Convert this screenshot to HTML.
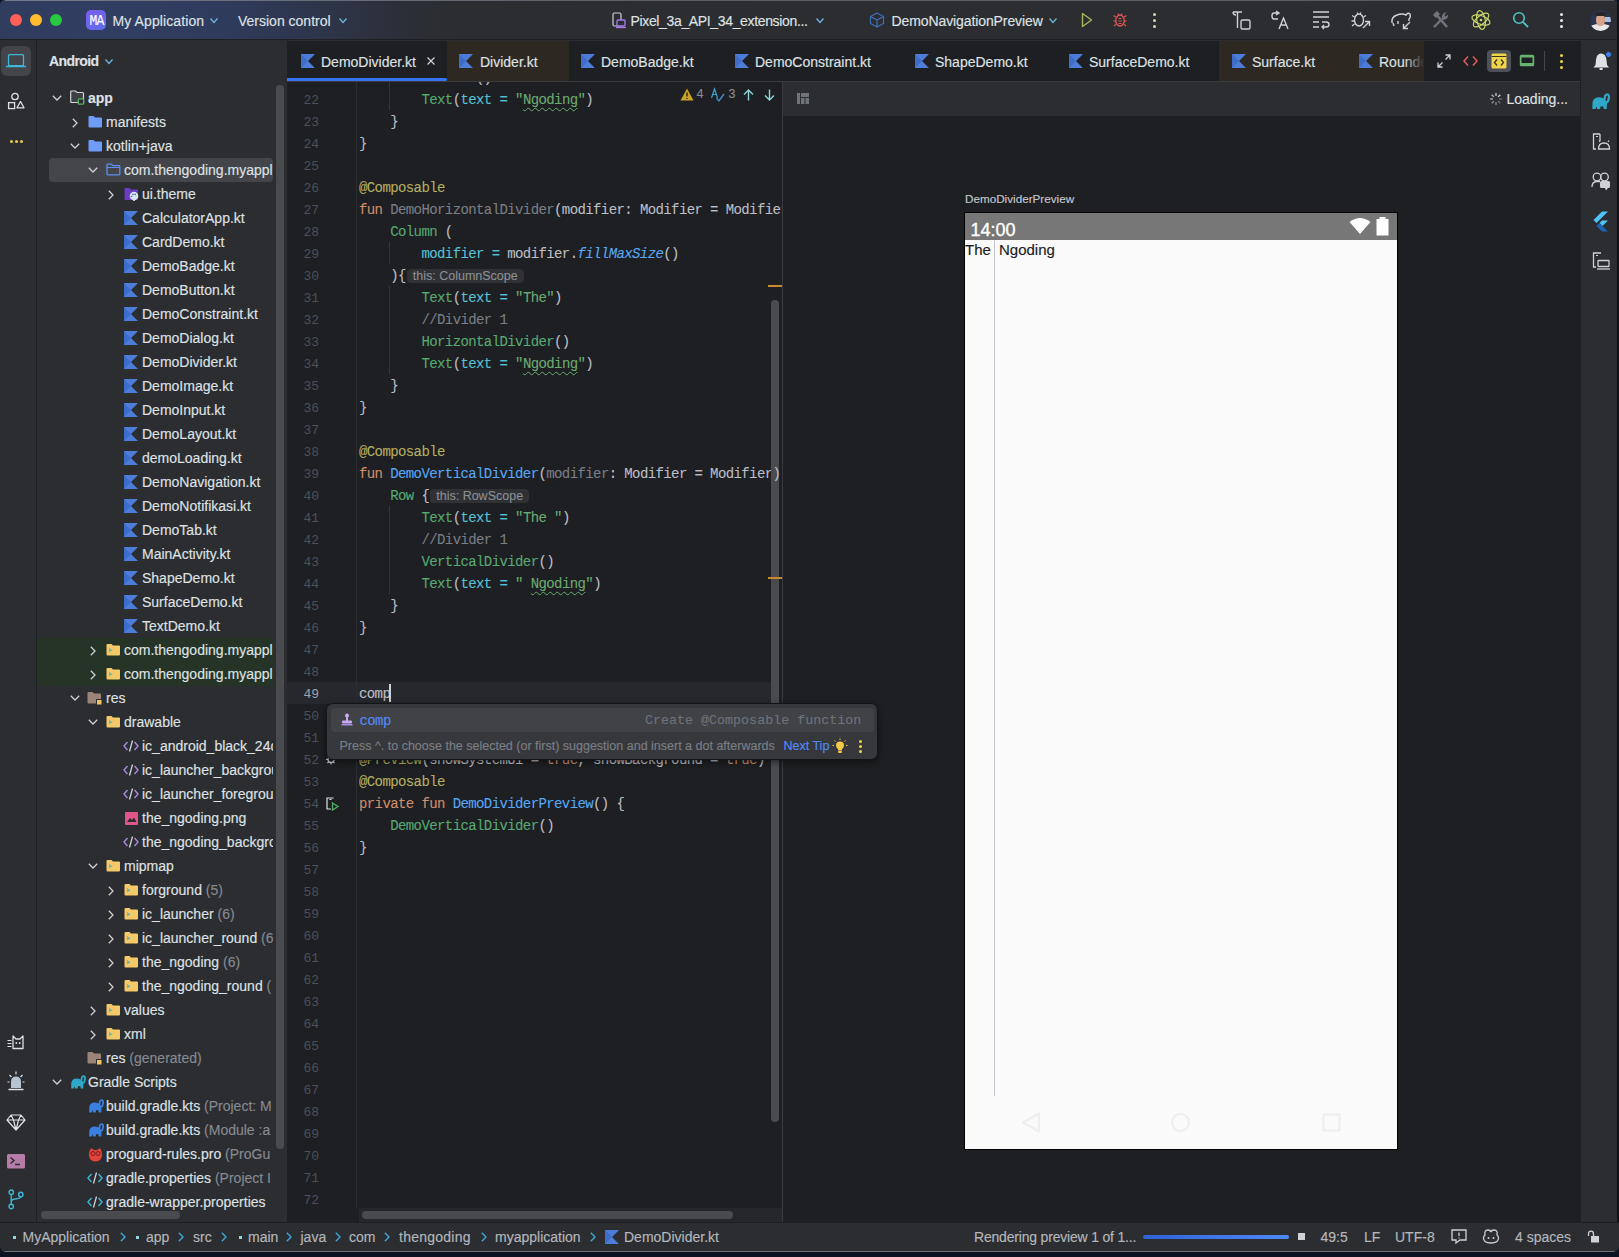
<!DOCTYPE html><html><head><meta charset="utf-8"><style>
*{box-sizing:border-box;margin:0;padding:0}
html,body{width:1619px;height:1257px;overflow:hidden;background:#0b1322}
body{font-family:"Liberation Sans",sans-serif;font-size:14px;color:#dfe1e5;position:relative}
.a{position:absolute}
svg{position:absolute;overflow:visible}
#win{position:absolute;left:0;top:0;width:1619px;height:1252px;background:#2b2d30;border-radius:5px 5px 6px 6px;overflow:hidden}
#title{position:absolute;left:0;top:0;width:1619px;height:40px;background:linear-gradient(90deg,#2f3c5e 0px,#303e62 120px,#2f3b5b 230px,#2d3446 340px,#2b2e35 410px,#2b2d30 470px,#2b2d30 100%);border-bottom:1px solid #1e1f22}
.t{position:absolute;white-space:pre;line-height:16px;height:16px;-webkit-text-stroke:0.15px currentColor}
#lstrip{left:0;top:41px;width:37px;height:1181px;background:#2b2d30;border-right:1px solid #1e1f22}
#proj{left:37px;top:41px;width:250px;height:1181px;background:#2b2d30;overflow:hidden}
#editor{left:287px;top:82px;width:495px;height:1140px;background:#1e1f22;overflow:hidden}
#tabs{left:287px;top:41px;width:1294px;height:41px;background:#1e1f22;border-bottom:1px solid #393b40;overflow:hidden}
#preview{left:782px;top:82px;width:799px;height:1140px;background:#1e1f22;border-left:1px solid #393b40}
#ptool{left:783px;top:82px;width:798px;height:34px;background:#2b2d30}
#rstrip{left:1580px;top:41px;width:39px;height:1181px;background:#2b2d30;border-left:1px solid #1e1f22}
#status{left:0;top:1222px;width:1619px;height:30px;background:#2b2d30;border-top:1px solid #1e1f22}
.row{position:absolute;height:16px;line-height:16px;white-space:pre;font-size:14px;color:#dfe1e5}
.ln{position:absolute;left:287px;width:32px;text-align:right;font-family:"Liberation Mono",monospace;font-size:13px;color:#4b5059;line-height:22px;height:22px}
.cl{position:absolute;left:359px;font-family:"Liberation Mono",monospace;font-size:14px;letter-spacing:-0.6px;color:#bcbec4;line-height:22px;height:22px;white-space:pre;-webkit-text-stroke:0.1px currentColor}
.kw{color:#cf8e6d}.an{color:#b3ae60}.fn{color:#56a8f5}.cp{color:#57aa73}.na{color:#56c1d6}.st{color:#6aab73}.cm{color:#7a7e85}.gr{color:#7a7e85}.it{font-style:italic;color:#56a8f5}
.hint{display:inline-block;background:#2f3135;color:#8c8f94;font-family:"Liberation Sans",sans-serif;font-size:12.5px;letter-spacing:0;line-height:14px;height:14px;padding:0 6px;border-radius:4px;vertical-align:0px;margin-left:1px}
.sq{text-decoration:underline wavy #6aab73;text-underline-offset:3px;text-decoration-thickness:1px}
.dim{color:#868a91}
</style></head><body><div id="win">
<div id="title">
<div class="a" style="left:10px;top:14px;width:12px;height:12px;border-radius:6px;background:#ff5f57"></div>
<div class="a" style="left:30px;top:14px;width:12px;height:12px;border-radius:6px;background:#febc2e"></div>
<div class="a" style="left:50px;top:14px;width:12px;height:12px;border-radius:6px;background:#28c840"></div>
<div class="a" style="left:86px;top:10px;width:20px;height:20px;border-radius:5px;background:linear-gradient(135deg,#7b5cf0,#5d6fe8)"></div>
<div class="t" style="left:87px;top:13.5px;width:19px;text-align:center;font-family:'Liberation Mono',monospace;font-size:13px;color:#fff;letter-spacing:-0.7px;transform:scaleY(1.12)">MA</div>
<div class="t" style="left:112.5px;top:13.0px;font-size:14px;color:#dfe1e5;font-weight:normal;letter-spacing:0.1px">My Application</div>
<svg style="left:210px;top:18px" width="8" height="5" viewBox="0 0 8 5"><path d="M0.5 0.5 L4.0 4.5 L7.5 0.5" fill="none" stroke="#6fb4dc" stroke-width="1.3"/></svg>
<div class="t" style="left:238px;top:13.0px;font-size:14px;color:#dfe1e5;font-weight:normal;">Version control</div>
<svg style="left:339px;top:18px" width="8" height="5" viewBox="0 0 8 5"><path d="M0.5 0.5 L4.0 4.5 L7.5 0.5" fill="none" stroke="#6fb4dc" stroke-width="1.3"/></svg>
<svg style="left:612px;top:12px" width="14" height="17" viewBox="0 0 14 17"><rect x="1" y="1" width="8" height="13" rx="1.5" fill="none" stroke="#cfd1d6" stroke-width="1.2"/><rect x="5" y="8" width="8" height="6" rx="1" fill="#2b2d30" stroke="#a77cf0" stroke-width="1.3"/><line x1="4" y1="15.5" x2="14" y2="15.5" stroke="#a77cf0" stroke-width="1.3"/></svg>
<div class="t" style="left:630.5px;top:13.0px;font-size:14px;color:#dfe1e5;font-weight:normal;letter-spacing:-0.35px">Pixel_3a_API_34_extension...</div>
<svg style="left:816px;top:18px" width="8" height="5" viewBox="0 0 8 5"><path d="M0.5 0.5 L4.0 4.5 L7.5 0.5" fill="none" stroke="#6fb4dc" stroke-width="1.3"/></svg>
<svg style="left:869px;top:12px" width="16" height="16" viewBox="0 0 16 16"><path d="M8 1 L14.5 4.5 L14.5 11.5 L8 15 L1.5 11.5 L1.5 4.5 Z M1.5 4.5 L8 8 L14.5 4.5 M8 8 L8 15" fill="none" stroke="#3f6fb8" stroke-width="1.2"/></svg>
<div class="t" style="left:891.5px;top:13.0px;font-size:14px;color:#dfe1e5;font-weight:normal;letter-spacing:-0.1px">DemoNavigationPreview</div>
<svg style="left:1049px;top:18px" width="8" height="5" viewBox="0 0 8 5"><path d="M0.5 0.5 L4.0 4.5 L7.5 0.5" fill="none" stroke="#6fb4dc" stroke-width="1.3"/></svg>
<svg style="left:1081px;top:12px" width="12" height="16" viewBox="0 0 12 16"><path d="M1.5 1.5 L10.5 8 L1.5 14.5 Z" fill="none" stroke="#a9b75c" stroke-width="1.4" stroke-linejoin="round"/></svg>
<svg style="left:1113px;top:12px" width="14" height="16" viewBox="0 0 14 16"><ellipse cx="7" cy="8.5" rx="4.2" ry="5.5" fill="none" stroke="#e05555" stroke-width="1.4"/><path d="M3 5 L0.5 3.5 M11 5 L13.5 3.5 M2.8 9 L0.3 9 M11.2 9 L13.7 9 M3 12.5 L0.8 14 M11 12.5 L13.2 14 M5 1.5 L6 3 M9 1.5 L8 3" stroke="#e05555" stroke-width="1.2"/><path d="M5.5 6.5 h3 M5.5 9 h3 M5.5 11.5 h3" stroke="#e05555" stroke-width="1"/></svg>
<div class="a" style="left:1152.5px;top:13px;width:3px;height:3px;border-radius:2px;background:#ded6a8"></div>
<div class="a" style="left:1152.5px;top:19px;width:3px;height:3px;border-radius:2px;background:#ded6a8"></div>
<div class="a" style="left:1152.5px;top:25px;width:3px;height:3px;border-radius:2px;background:#ded6a8"></div>
<svg style="left:1231px;top:10px" width="21" height="20" viewBox="0 0 21 20"><path d="M2 2 h9 M6.5 2 v16 M2 2 q0 3 3 3" fill="none" stroke="#cfd1d6" stroke-width="1.4"/><rect x="10" y="10" width="9" height="9" rx="1.5" fill="none" stroke="#cfd1d6" stroke-width="1.4"/></svg>
<svg style="left:1271px;top:10px" width="20" height="20" viewBox="0 0 20 20"><path d="M8 3 L3 3 Q1 3 1 6 Q1 9 3 9 L7 9 M5 1 L8 3 L5 5" fill="none" stroke="#cfd1d6" stroke-width="1.4"/><path d="M8 19 L12.5 8 L17 19 M9.5 15 h6" fill="none" stroke="#cfd1d6" stroke-width="1.4"/></svg>
<svg style="left:1311px;top:10px" width="20" height="20" viewBox="0 0 20 20"><path d="M2 2 h16 M2 7 h16 M2 12 h6 M2 17 h6" stroke="#cfd1d6" stroke-width="1.4"/><path d="M11 12 h4 q3 0 3 2.5 q0 2.5 -3 2.5 h-3 M13 15 L11 17 L13 19" fill="none" stroke="#cfd1d6" stroke-width="1.4"/></svg>
<svg style="left:1351px;top:10px" width="20" height="20" viewBox="0 0 20 20"><ellipse cx="8" cy="10" rx="4.5" ry="6" fill="none" stroke="#cfd1d6" stroke-width="1.4"/><path d="M3.5 7 L1 5.5 M3.5 11 L0.5 11 M3.5 14 L1 16 M12.5 7 L15 5.5 M6 2.5 L7 4 M10 2.5 L9 4" stroke="#cfd1d6" stroke-width="1.3"/><path d="M12 18 L18.5 11.5 M14 11.5 h4.5 v4.5" fill="none" stroke="#cfd1d6" stroke-width="1.4"/></svg>
<svg style="left:1390px;top:10px" width="22" height="20" viewBox="0 0 22 20"><path d="M2 13 Q1 7 7 5 Q12 3 16 5 Q18 2 20 4 Q21 7 19 9 L19 11 M3 13 L4 16 M8 11 L8 14" fill="none" stroke="#cfd1d6" stroke-width="1.4"/><path d="M20 12 L13.5 18.5 M13.5 14 v4.5 h4.5" fill="none" stroke="#cfd1d6" stroke-width="1.4"/></svg>
<svg style="left:1432px;top:10px" width="18" height="20" viewBox="0 0 18 20"><path d="M3 3 L15 17" stroke="#6f737a" stroke-width="2.6"/><path d="M1 5 L5 1 L8 4 L4 8 Z" fill="#6f737a"/><path d="M2 17 L10 9" stroke="#6f737a" stroke-width="2.4"/><path d="M10 9 Q9 4 13 2.5 L14.5 2.3 L12.5 5 L13.5 6.5 L16 4.8 Q16.5 9 11.5 10 Z" fill="#6f737a"/></svg>
<svg style="left:1470px;top:9px" width="22" height="22" viewBox="0 0 22 22"><ellipse cx="11" cy="11" rx="9.5" ry="4.2" transform="rotate(20 11 11)" fill="none" stroke="#c9d66e" stroke-width="1.2"/><ellipse cx="11" cy="11" rx="9.5" ry="4.2" transform="rotate(80 11 11)" fill="none" stroke="#c9d66e" stroke-width="1.2"/><ellipse cx="11" cy="11" rx="9.5" ry="4.2" transform="rotate(-40 11 11)" fill="none" stroke="#c9d66e" stroke-width="1.2"/><circle cx="11" cy="11" r="1.3" fill="#c9d66e"/></svg>
<svg style="left:1512px;top:11px" width="18" height="18" viewBox="0 0 18 18"><circle cx="7" cy="7" r="5.3" fill="none" stroke="#4fc3c0" stroke-width="1.6"/><path d="M11 11 L16 16" stroke="#4fc3c0" stroke-width="1.8"/></svg>
<div class="a" style="left:1559.5px;top:13px;width:3px;height:3px;border-radius:2px;background:#e8e8e8"></div>
<div class="a" style="left:1559.5px;top:19px;width:3px;height:3px;border-radius:2px;background:#e8e8e8"></div>
<div class="a" style="left:1559.5px;top:25px;width:3px;height:3px;border-radius:2px;background:#e8e8e8"></div>
<div class="a" style="left:1590px;top:10px;width:21px;height:21px;border-radius:11px;overflow:hidden;background:#2a3550"><div class="a" style="left:-2px;top:14px;width:25px;height:10px;border-radius:50%;background:#e8e8ea"></div><div class="a" style="left:6px;top:4px;width:9px;height:12px;border-radius:45%;background:#d9a48c"></div><div class="a" style="left:5px;top:2px;width:11px;height:4px;border-radius:40%;background:#2b2624"></div><div class="a" style="left:15px;top:7px;width:6px;height:5px;background:#a9c0e0"></div></div>
</div>
<div class="a" id="lstrip"></div>
<div class="a" style="left:1px;top:46px;width:30px;height:30px;border-radius:6px;background:#43454a"></div>
<svg style="left:6px;top:54px" width="20" height="14" viewBox="0 0 20 14"><rect x="2.5" y="0.7" width="15" height="11" rx="1" fill="none" stroke="#3fb6d8" stroke-width="1.3"/><path d="M0 12.5 h20" stroke="#3fb6d8" stroke-width="1.5"/></svg>
<svg style="left:7px;top:92px" width="18" height="18" viewBox="0 0 18 18"><circle cx="8" cy="4.5" r="3.2" fill="none" stroke="#dfe1e5" stroke-width="1.3"/><rect x="1.6" y="10.6" width="6" height="6" fill="none" stroke="#dfe1e5" stroke-width="1.3"/><path d="M13.5 9.5 L17 15.8 L10 15.8 Z" fill="none" stroke="#dfe1e5" stroke-width="1.3" stroke-linejoin="round"/></svg>
<div class="a" style="left:9.5px;top:139.5px;width:3.4px;height:3.4px;border-radius:2px;background:#e6c84a"></div>
<div class="a" style="left:14.5px;top:139.5px;width:3.4px;height:3.4px;border-radius:2px;background:#e6c84a"></div>
<div class="a" style="left:19.5px;top:139.5px;width:3.4px;height:3.4px;border-radius:2px;background:#e6c84a"></div>
<svg style="left:7px;top:1035px" width="18" height="15" viewBox="0 0 18 15"><path d="M6 13.5 L6 5 L6 1 L9 4 L13 4 L16 1 L16 13.5 Z" fill="none" stroke="#dfe1e5" stroke-width="1.3" stroke-linejoin="round"/><path d="M0.5 5.5 h4 M0.5 8.5 h4 M0.5 11.5 h4" stroke="#dfe1e5" stroke-width="1.2"/><circle cx="9.3" cy="8" r="0.9" fill="#dfe1e5"/><circle cx="12.7" cy="8" r="0.9" fill="#dfe1e5"/></svg>
<svg style="left:7px;top:1071px" width="18" height="20" viewBox="0 0 18 20"><path d="M4 17 L4 11 Q4 5.5 9 5.5 Q14 5.5 14 11 L14 17 Z" fill="#b7c4d3"/><path d="M1.5 18.5 h15" stroke="#dfe1e5" stroke-width="1.5"/><path d="M9 0.5 v3 M2.5 4 l2 2 M15.5 4 l-2 2 M0.5 11 h2 M15.5 11 h2" stroke="#dfe1e5" stroke-width="1.2"/></svg>
<svg style="left:6px;top:1114px" width="20" height="17" viewBox="0 0 20 17"><path d="M5 1 h10 L19 6 L10 16 L1 6 Z M1 6 h18 M5 1 L7.5 6 L10 16 L12.5 6 L15 1" fill="none" stroke="#dfe1e5" stroke-width="1.2" stroke-linejoin="round"/></svg>
<svg style="left:7px;top:1154px" width="18" height="15" viewBox="0 0 18 15"><rect x="0" y="0" width="18" height="14.5" rx="1.5" fill="#b57ca9"/><path d="M3.5 3.5 L7 6.5 L3.5 9.5" fill="none" stroke="#2b2d30" stroke-width="1.5"/><path d="M8 10.5 h5" stroke="#2b2d30" stroke-width="1.4"/></svg>
<svg style="left:8px;top:1189px" width="16" height="21" viewBox="0 0 16 21"><circle cx="3.2" cy="3.2" r="2.2" fill="none" stroke="#3fb6d8" stroke-width="1.4"/><circle cx="3.2" cy="17.5" r="2.2" fill="none" stroke="#3fb6d8" stroke-width="1.4"/><circle cx="12.8" cy="5.5" r="2.2" fill="none" stroke="#3fb6d8" stroke-width="1.4"/><path d="M3.2 5.4 L3.2 15.3 M3.2 13 Q3.2 10.5 7 10 Q12.8 9.5 12.8 7.7" fill="none" stroke="#3fb6d8" stroke-width="1.4"/></svg>
<div class="a" id="proj"></div>
<div class="t" style="left:49px;top:53px;font-weight:bold;color:#dfe1e5;letter-spacing:-0.6px">Android</div>
<svg style="left:105px;top:59px" width="8" height="5" viewBox="0 0 8 5"><path d="M0.5 0.5 L4.0 4.5 L7.5 0.5" fill="none" stroke="#6fb4dc" stroke-width="1.3"/></svg>
<div class="a" style="left:49px;top:158px;width:224px;height:24px;border-radius:4px;background:#43454a"></div>
<div class="a" style="left:37px;top:638px;width:236px;height:48px;background:#253427"></div>
<div class="a" style="left:37px;top:80px;width:236px;height:1142px;overflow:hidden">
<svg style="left:15px;top:15px" width="10" height="6" viewBox="0 0 10 6"><path d="M0.8 0.8 L5 5 L9.2 0.8" fill="none" stroke="#cfd1d6" stroke-width="1.3"/></svg>
<svg style="left:33px;top:10px" width="17" height="15" viewBox="0 0 17 15"><path d="M0.7 2 Q0.7 1 1.7 1 H5.5 L7 2.5 H12.5 Q13.5 2.5 13.5 3.5 V12.5 H1.7 Q0.7 12.5 0.7 11.5 Z" fill="#3c3f44" stroke="#cfd1d6" stroke-width="1.2"/><rect x="8.3" y="8.8" width="5.4" height="5.4" rx="1" fill="#2b2d30" stroke="#57b366" stroke-width="1.3"/></svg>
<div class="t" style="left:51px;top:10px;font-weight:bold">app</div>
<svg style="left:35px;top:37.5px" width="6" height="10" viewBox="0 0 6 10"><path d="M0.8 0.8 L5 5 L0.8 9.2" fill="none" stroke="#cfd1d6" stroke-width="1.3"/></svg>
<svg style="left:51px;top:35px" width="15" height="14" viewBox="0 0 15 14"><path d="M0.5 2 Q0.5 1 1.5 1 H5.5 L7 2.5 H13 Q14 2.5 14 3.5 V11.5 Q14 12.5 13 12.5 H1.5 Q0.5 12.5 0.5 11.5 Z" fill="#6e9cf6"/></svg>
<div class="t" style="left:69px;top:34px;font-weight:normal">manifests</div>
<svg style="left:33px;top:63px" width="10" height="6" viewBox="0 0 10 6"><path d="M0.8 0.8 L5 5 L9.2 0.8" fill="none" stroke="#cfd1d6" stroke-width="1.3"/></svg>
<svg style="left:51px;top:59px" width="15" height="14" viewBox="0 0 15 14"><path d="M0.5 2 Q0.5 1 1.5 1 H5.5 L7 2.5 H13 Q14 2.5 14 3.5 V11.5 Q14 12.5 13 12.5 H1.5 Q0.5 12.5 0.5 11.5 Z" fill="#6e9cf6"/></svg>
<div class="t" style="left:69px;top:58px;font-weight:normal">kotlin+java</div>
<svg style="left:51px;top:87px" width="10" height="6" viewBox="0 0 10 6"><path d="M0.8 0.8 L5 5 L9.2 0.8" fill="none" stroke="#cfd1d6" stroke-width="1.3"/></svg>
<svg style="left:69px;top:83px" width="15" height="13" viewBox="0 0 15 13"><path d="M1 2 Q1 1.2 1.8 1.2 H5.5 L7 2.7 H13 Q13.8 2.7 13.8 3.5 V11 Q13.8 11.8 13 11.8 H1.8 Q1 11.8 1 11 Z" fill="none" stroke="#5b8ff0" stroke-width="1.3"/><path d="M1 4.5 H13.8" stroke="#5b8ff0" stroke-width="1.2"/></svg>
<div class="t" style="left:87px;top:82px;font-weight:normal">com.thengoding.myappl</div>
<svg style="left:71px;top:109.5px" width="6" height="10" viewBox="0 0 6 10"><path d="M0.8 0.8 L5 5 L0.8 9.2" fill="none" stroke="#cfd1d6" stroke-width="1.3"/></svg>
<svg style="left:87px;top:107px" width="15" height="14" viewBox="0 0 15 14"><path d="M0.5 2 Q0.5 1 1.5 1 H5.5 L7 2.5 H13 Q14 2.5 14 3.5 V12 Q14 13 13 13 H1.5 Q0.5 13 0.5 12 Z" fill="#6a3dc2"/><circle cx="10" cy="9" r="4.3" fill="#dde6f7"/><circle cx="9" cy="7.4" r="0.8" fill="#3c6bd8"/><circle cx="11.2" cy="7.4" r="0.8" fill="#3c6bd8"/><circle cx="7.5" cy="9.5" r="0.8" fill="#3c6bd8"/><rect x="9.3" y="11" width="1.6" height="3" fill="#dde6f7"/></svg>
<div class="t" style="left:105px;top:106px;font-weight:normal">ui.theme</div>
<svg style="left:87px;top:131px" width="14" height="14" viewBox="0 0 14 14"><path d="M0 0 H14 L7 7 L14 14 H0 Z" fill="#4d7dd8"/><path d="M0 14 L7 7 L0 0" fill="#3e6cc9"/></svg>
<div class="t" style="left:105px;top:130px;font-weight:normal">CalculatorApp.kt</div>
<svg style="left:87px;top:155px" width="14" height="14" viewBox="0 0 14 14"><path d="M0 0 H14 L7 7 L14 14 H0 Z" fill="#4d7dd8"/><path d="M0 14 L7 7 L0 0" fill="#3e6cc9"/></svg>
<div class="t" style="left:105px;top:154px;font-weight:normal">CardDemo.kt</div>
<svg style="left:87px;top:179px" width="14" height="14" viewBox="0 0 14 14"><path d="M0 0 H14 L7 7 L14 14 H0 Z" fill="#4d7dd8"/><path d="M0 14 L7 7 L0 0" fill="#3e6cc9"/></svg>
<div class="t" style="left:105px;top:178px;font-weight:normal">DemoBadge.kt</div>
<svg style="left:87px;top:203px" width="14" height="14" viewBox="0 0 14 14"><path d="M0 0 H14 L7 7 L14 14 H0 Z" fill="#4d7dd8"/><path d="M0 14 L7 7 L0 0" fill="#3e6cc9"/></svg>
<div class="t" style="left:105px;top:202px;font-weight:normal">DemoButton.kt</div>
<svg style="left:87px;top:227px" width="14" height="14" viewBox="0 0 14 14"><path d="M0 0 H14 L7 7 L14 14 H0 Z" fill="#4d7dd8"/><path d="M0 14 L7 7 L0 0" fill="#3e6cc9"/></svg>
<div class="t" style="left:105px;top:226px;font-weight:normal">DemoConstraint.kt</div>
<svg style="left:87px;top:251px" width="14" height="14" viewBox="0 0 14 14"><path d="M0 0 H14 L7 7 L14 14 H0 Z" fill="#4d7dd8"/><path d="M0 14 L7 7 L0 0" fill="#3e6cc9"/></svg>
<div class="t" style="left:105px;top:250px;font-weight:normal">DemoDialog.kt</div>
<svg style="left:87px;top:275px" width="14" height="14" viewBox="0 0 14 14"><path d="M0 0 H14 L7 7 L14 14 H0 Z" fill="#4d7dd8"/><path d="M0 14 L7 7 L0 0" fill="#3e6cc9"/></svg>
<div class="t" style="left:105px;top:274px;font-weight:normal">DemoDivider.kt</div>
<svg style="left:87px;top:299px" width="14" height="14" viewBox="0 0 14 14"><path d="M0 0 H14 L7 7 L14 14 H0 Z" fill="#4d7dd8"/><path d="M0 14 L7 7 L0 0" fill="#3e6cc9"/></svg>
<div class="t" style="left:105px;top:298px;font-weight:normal">DemoImage.kt</div>
<svg style="left:87px;top:323px" width="14" height="14" viewBox="0 0 14 14"><path d="M0 0 H14 L7 7 L14 14 H0 Z" fill="#4d7dd8"/><path d="M0 14 L7 7 L0 0" fill="#3e6cc9"/></svg>
<div class="t" style="left:105px;top:322px;font-weight:normal">DemoInput.kt</div>
<svg style="left:87px;top:347px" width="14" height="14" viewBox="0 0 14 14"><path d="M0 0 H14 L7 7 L14 14 H0 Z" fill="#4d7dd8"/><path d="M0 14 L7 7 L0 0" fill="#3e6cc9"/></svg>
<div class="t" style="left:105px;top:346px;font-weight:normal">DemoLayout.kt</div>
<svg style="left:87px;top:371px" width="14" height="14" viewBox="0 0 14 14"><path d="M0 0 H14 L7 7 L14 14 H0 Z" fill="#4d7dd8"/><path d="M0 14 L7 7 L0 0" fill="#3e6cc9"/></svg>
<div class="t" style="left:105px;top:370px;font-weight:normal">demoLoading.kt</div>
<svg style="left:87px;top:395px" width="14" height="14" viewBox="0 0 14 14"><path d="M0 0 H14 L7 7 L14 14 H0 Z" fill="#4d7dd8"/><path d="M0 14 L7 7 L0 0" fill="#3e6cc9"/></svg>
<div class="t" style="left:105px;top:394px;font-weight:normal">DemoNavigation.kt</div>
<svg style="left:87px;top:419px" width="14" height="14" viewBox="0 0 14 14"><path d="M0 0 H14 L7 7 L14 14 H0 Z" fill="#4d7dd8"/><path d="M0 14 L7 7 L0 0" fill="#3e6cc9"/></svg>
<div class="t" style="left:105px;top:418px;font-weight:normal">DemoNotifikasi.kt</div>
<svg style="left:87px;top:443px" width="14" height="14" viewBox="0 0 14 14"><path d="M0 0 H14 L7 7 L14 14 H0 Z" fill="#4d7dd8"/><path d="M0 14 L7 7 L0 0" fill="#3e6cc9"/></svg>
<div class="t" style="left:105px;top:442px;font-weight:normal">DemoTab.kt</div>
<svg style="left:87px;top:467px" width="14" height="14" viewBox="0 0 14 14"><path d="M0 0 H14 L7 7 L14 14 H0 Z" fill="#4d7dd8"/><path d="M0 14 L7 7 L0 0" fill="#3e6cc9"/></svg>
<div class="t" style="left:105px;top:466px;font-weight:normal">MainActivity.kt</div>
<svg style="left:87px;top:491px" width="14" height="14" viewBox="0 0 14 14"><path d="M0 0 H14 L7 7 L14 14 H0 Z" fill="#4d7dd8"/><path d="M0 14 L7 7 L0 0" fill="#3e6cc9"/></svg>
<div class="t" style="left:105px;top:490px;font-weight:normal">ShapeDemo.kt</div>
<svg style="left:87px;top:515px" width="14" height="14" viewBox="0 0 14 14"><path d="M0 0 H14 L7 7 L14 14 H0 Z" fill="#4d7dd8"/><path d="M0 14 L7 7 L0 0" fill="#3e6cc9"/></svg>
<div class="t" style="left:105px;top:514px;font-weight:normal">SurfaceDemo.kt</div>
<svg style="left:87px;top:539px" width="14" height="14" viewBox="0 0 14 14"><path d="M0 0 H14 L7 7 L14 14 H0 Z" fill="#4d7dd8"/><path d="M0 14 L7 7 L0 0" fill="#3e6cc9"/></svg>
<div class="t" style="left:105px;top:538px;font-weight:normal">TextDemo.kt</div>
<svg style="left:53px;top:565.5px" width="6" height="10" viewBox="0 0 6 10"><path d="M0.8 0.8 L5 5 L0.8 9.2" fill="none" stroke="#cfd1d6" stroke-width="1.3"/></svg>
<svg style="left:69px;top:563px" width="15" height="14" viewBox="0 0 15 14"><path d="M0.5 2 Q0.5 1 1.5 1 H5.5 L7 2.5 H13 Q14 2.5 14 3.5 V11.5 Q14 12.5 13 12.5 H1.5 Q0.5 12.5 0.5 11.5 Z" fill="#f4c968"/><path d="M3 5 L6.5 7.3 L3 9.6 Z" fill="#5bb4b0" opacity="0.85"/></svg>
<div class="t" style="left:87px;top:562px;font-weight:normal">com.thengoding.myappl</div>
<svg style="left:53px;top:589.5px" width="6" height="10" viewBox="0 0 6 10"><path d="M0.8 0.8 L5 5 L0.8 9.2" fill="none" stroke="#cfd1d6" stroke-width="1.3"/></svg>
<svg style="left:69px;top:587px" width="15" height="14" viewBox="0 0 15 14"><path d="M0.5 2 Q0.5 1 1.5 1 H5.5 L7 2.5 H13 Q14 2.5 14 3.5 V11.5 Q14 12.5 13 12.5 H1.5 Q0.5 12.5 0.5 11.5 Z" fill="#f4c968"/><path d="M3 5 L6.5 7.3 L3 9.6 Z" fill="#5bb4b0" opacity="0.85"/></svg>
<div class="t" style="left:87px;top:586px;font-weight:normal">com.thengoding.myappl</div>
<svg style="left:33px;top:615px" width="10" height="6" viewBox="0 0 10 6"><path d="M0.8 0.8 L5 5 L9.2 0.8" fill="none" stroke="#cfd1d6" stroke-width="1.3"/></svg>
<svg style="left:50px;top:611px" width="15" height="14" viewBox="0 0 15 14"><path d="M0.5 2 Q0.5 1 1.5 1 H5.5 L7 2.5 H13 Q14 2.5 14 3.5 V11.5 Q14 12.5 13 12.5 H1.5 Q0.5 12.5 0.5 11.5 Z" fill="#9c8378"/><rect x="9" y="8" width="5.5" height="5.5" fill="#2b2d30"/><rect x="10" y="9" width="4.5" height="4.5" fill="#f2c55c"/></svg>
<div class="t" style="left:69px;top:610px;font-weight:normal">res</div>
<svg style="left:51px;top:639px" width="10" height="6" viewBox="0 0 10 6"><path d="M0.8 0.8 L5 5 L9.2 0.8" fill="none" stroke="#cfd1d6" stroke-width="1.3"/></svg>
<svg style="left:69px;top:635px" width="15" height="14" viewBox="0 0 15 14"><path d="M0.5 2 Q0.5 1 1.5 1 H5.5 L7 2.5 H13 Q14 2.5 14 3.5 V11.5 Q14 12.5 13 12.5 H1.5 Q0.5 12.5 0.5 11.5 Z" fill="#f4c968"/><path d="M3 5 L6.5 7.3 L3 9.6 Z" fill="#5bb4b0" opacity="0.85"/></svg>
<div class="t" style="left:87px;top:634px;font-weight:normal">drawable</div>
<svg style="left:86px;top:659px" width="16" height="14" viewBox="0 0 16 14"><path d="M4.5 3 L1 7 L4.5 11 M11.5 3 L15 7 L11.5 11" fill="none" stroke="#a88ae0" stroke-width="1.4"/><path d="M9.5 1.5 L6.5 12.5" stroke="#cfd1d6" stroke-width="1.3"/></svg>
<div class="t" style="left:105px;top:658px;font-weight:normal">ic_android_black_24d</div>
<svg style="left:86px;top:683px" width="16" height="14" viewBox="0 0 16 14"><path d="M4.5 3 L1 7 L4.5 11 M11.5 3 L15 7 L11.5 11" fill="none" stroke="#a88ae0" stroke-width="1.4"/><path d="M9.5 1.5 L6.5 12.5" stroke="#cfd1d6" stroke-width="1.3"/></svg>
<div class="t" style="left:105px;top:682px;font-weight:normal">ic_launcher_backgrou</div>
<svg style="left:86px;top:707px" width="16" height="14" viewBox="0 0 16 14"><path d="M4.5 3 L1 7 L4.5 11 M11.5 3 L15 7 L11.5 11" fill="none" stroke="#a88ae0" stroke-width="1.4"/><path d="M9.5 1.5 L6.5 12.5" stroke="#cfd1d6" stroke-width="1.3"/></svg>
<div class="t" style="left:105px;top:706px;font-weight:normal">ic_launcher_foregrou</div>
<svg style="left:87px;top:731px" width="14" height="14" viewBox="0 0 14 14"><rect x="1" y="1" width="13" height="13" rx="1" fill="#e0558a"/><path d="M3 11 L6 7 L8 9 L10 6.5 L12.5 11 Z" fill="#2b2d30"/></svg>
<div class="t" style="left:105px;top:730px;font-weight:normal">the_ngoding.png</div>
<svg style="left:86px;top:755px" width="16" height="14" viewBox="0 0 16 14"><path d="M4.5 3 L1 7 L4.5 11 M11.5 3 L15 7 L11.5 11" fill="none" stroke="#a88ae0" stroke-width="1.4"/><path d="M9.5 1.5 L6.5 12.5" stroke="#cfd1d6" stroke-width="1.3"/></svg>
<div class="t" style="left:105px;top:754px;font-weight:normal">the_ngoding_backgrc</div>
<svg style="left:51px;top:783px" width="10" height="6" viewBox="0 0 10 6"><path d="M0.8 0.8 L5 5 L9.2 0.8" fill="none" stroke="#cfd1d6" stroke-width="1.3"/></svg>
<svg style="left:69px;top:779px" width="15" height="14" viewBox="0 0 15 14"><path d="M0.5 2 Q0.5 1 1.5 1 H5.5 L7 2.5 H13 Q14 2.5 14 3.5 V11.5 Q14 12.5 13 12.5 H1.5 Q0.5 12.5 0.5 11.5 Z" fill="#f4c968"/><path d="M3 5 L6.5 7.3 L3 9.6 Z" fill="#5bb4b0" opacity="0.85"/></svg>
<div class="t" style="left:87px;top:778px;font-weight:normal">mipmap</div>
<svg style="left:71px;top:805.5px" width="6" height="10" viewBox="0 0 6 10"><path d="M0.8 0.8 L5 5 L0.8 9.2" fill="none" stroke="#cfd1d6" stroke-width="1.3"/></svg>
<svg style="left:87px;top:803px" width="15" height="14" viewBox="0 0 15 14"><path d="M0.5 2 Q0.5 1 1.5 1 H5.5 L7 2.5 H13 Q14 2.5 14 3.5 V11.5 Q14 12.5 13 12.5 H1.5 Q0.5 12.5 0.5 11.5 Z" fill="#f4c968"/><path d="M3 5 L6.5 7.3 L3 9.6 Z" fill="#5bb4b0" opacity="0.85"/></svg>
<div class="t" style="left:105px;top:802px;font-weight:normal">forground<span style="color:#868a91"> (5)</span></div>
<svg style="left:71px;top:829.5px" width="6" height="10" viewBox="0 0 6 10"><path d="M0.8 0.8 L5 5 L0.8 9.2" fill="none" stroke="#cfd1d6" stroke-width="1.3"/></svg>
<svg style="left:87px;top:827px" width="15" height="14" viewBox="0 0 15 14"><path d="M0.5 2 Q0.5 1 1.5 1 H5.5 L7 2.5 H13 Q14 2.5 14 3.5 V11.5 Q14 12.5 13 12.5 H1.5 Q0.5 12.5 0.5 11.5 Z" fill="#f4c968"/><path d="M3 5 L6.5 7.3 L3 9.6 Z" fill="#5bb4b0" opacity="0.85"/></svg>
<div class="t" style="left:105px;top:826px;font-weight:normal">ic_launcher<span style="color:#868a91"> (6)</span></div>
<svg style="left:71px;top:853.5px" width="6" height="10" viewBox="0 0 6 10"><path d="M0.8 0.8 L5 5 L0.8 9.2" fill="none" stroke="#cfd1d6" stroke-width="1.3"/></svg>
<svg style="left:87px;top:851px" width="15" height="14" viewBox="0 0 15 14"><path d="M0.5 2 Q0.5 1 1.5 1 H5.5 L7 2.5 H13 Q14 2.5 14 3.5 V11.5 Q14 12.5 13 12.5 H1.5 Q0.5 12.5 0.5 11.5 Z" fill="#f4c968"/><path d="M3 5 L6.5 7.3 L3 9.6 Z" fill="#5bb4b0" opacity="0.85"/></svg>
<div class="t" style="left:105px;top:850px;font-weight:normal">ic_launcher_round<span style="color:#868a91"> (6</span></div>
<svg style="left:71px;top:877.5px" width="6" height="10" viewBox="0 0 6 10"><path d="M0.8 0.8 L5 5 L0.8 9.2" fill="none" stroke="#cfd1d6" stroke-width="1.3"/></svg>
<svg style="left:87px;top:875px" width="15" height="14" viewBox="0 0 15 14"><path d="M0.5 2 Q0.5 1 1.5 1 H5.5 L7 2.5 H13 Q14 2.5 14 3.5 V11.5 Q14 12.5 13 12.5 H1.5 Q0.5 12.5 0.5 11.5 Z" fill="#f4c968"/><path d="M3 5 L6.5 7.3 L3 9.6 Z" fill="#5bb4b0" opacity="0.85"/></svg>
<div class="t" style="left:105px;top:874px;font-weight:normal">the_ngoding<span style="color:#868a91"> (6)</span></div>
<svg style="left:71px;top:901.5px" width="6" height="10" viewBox="0 0 6 10"><path d="M0.8 0.8 L5 5 L0.8 9.2" fill="none" stroke="#cfd1d6" stroke-width="1.3"/></svg>
<svg style="left:87px;top:899px" width="15" height="14" viewBox="0 0 15 14"><path d="M0.5 2 Q0.5 1 1.5 1 H5.5 L7 2.5 H13 Q14 2.5 14 3.5 V11.5 Q14 12.5 13 12.5 H1.5 Q0.5 12.5 0.5 11.5 Z" fill="#f4c968"/><path d="M3 5 L6.5 7.3 L3 9.6 Z" fill="#5bb4b0" opacity="0.85"/></svg>
<div class="t" style="left:105px;top:898px;font-weight:normal">the_ngoding_round<span style="color:#868a91"> (</span></div>
<svg style="left:53px;top:925.5px" width="6" height="10" viewBox="0 0 6 10"><path d="M0.8 0.8 L5 5 L0.8 9.2" fill="none" stroke="#cfd1d6" stroke-width="1.3"/></svg>
<svg style="left:69px;top:923px" width="15" height="14" viewBox="0 0 15 14"><path d="M0.5 2 Q0.5 1 1.5 1 H5.5 L7 2.5 H13 Q14 2.5 14 3.5 V11.5 Q14 12.5 13 12.5 H1.5 Q0.5 12.5 0.5 11.5 Z" fill="#f4c968"/><path d="M3 5 L6.5 7.3 L3 9.6 Z" fill="#5bb4b0" opacity="0.85"/></svg>
<div class="t" style="left:87px;top:922px;font-weight:normal">values</div>
<svg style="left:53px;top:949.5px" width="6" height="10" viewBox="0 0 6 10"><path d="M0.8 0.8 L5 5 L0.8 9.2" fill="none" stroke="#cfd1d6" stroke-width="1.3"/></svg>
<svg style="left:69px;top:947px" width="15" height="14" viewBox="0 0 15 14"><path d="M0.5 2 Q0.5 1 1.5 1 H5.5 L7 2.5 H13 Q14 2.5 14 3.5 V11.5 Q14 12.5 13 12.5 H1.5 Q0.5 12.5 0.5 11.5 Z" fill="#f4c968"/><path d="M3 5 L6.5 7.3 L3 9.6 Z" fill="#5bb4b0" opacity="0.85"/></svg>
<div class="t" style="left:87px;top:946px;font-weight:normal">xml</div>
<svg style="left:50px;top:971px" width="15" height="14" viewBox="0 0 15 14"><path d="M0.5 2 Q0.5 1 1.5 1 H5.5 L7 2.5 H13 Q14 2.5 14 3.5 V11.5 Q14 12.5 13 12.5 H1.5 Q0.5 12.5 0.5 11.5 Z" fill="#9c8378"/><rect x="9" y="8" width="5.5" height="5.5" fill="#2b2d30"/><rect x="10" y="9" width="4.5" height="4.5" fill="#f2c55c"/></svg>
<div class="t" style="left:69px;top:970px;font-weight:normal">res<span style="color:#868a91"> (generated)</span></div>
<svg style="left:15px;top:999px" width="10" height="6" viewBox="0 0 10 6"><path d="M0.8 0.8 L5 5 L9.2 0.8" fill="none" stroke="#cfd1d6" stroke-width="1.3"/></svg>
<svg style="left:33px;top:995px" width="16" height="14" viewBox="0 0 20 17"><path d="M1.5 16.5 L1.5 11 Q1.5 4 8.5 4 Q12.5 4 14.5 6 L17 9 L16.5 16.5 L13.5 16.5 L12.8 13.5 L10 13.8 L9.5 16.5 L6.5 16.5 L6 13.8 L4.8 16.5 Z" fill="#2ea8c8"/><path d="M14.5 6.5 Q14 1.3 16.8 1.1 Q19.2 1 18.8 4.8 Q18.4 7.8 16.8 10" fill="none" stroke="#2ea8c8" stroke-width="2.3"/><path d="M15.2 6.3 Q14.9 3 16.7 2.8" fill="none" stroke="#2b2d30" stroke-width="0.01"/></svg>
<div class="t" style="left:51px;top:994px;font-weight:normal">Gradle Scripts</div>
<svg style="left:51px;top:1019px" width="16" height="14" viewBox="0 0 20 17"><path d="M1.5 16.5 L1.5 11 Q1.5 4 8.5 4 Q12.5 4 14.5 6 L17 9 L16.5 16.5 L13.5 16.5 L12.8 13.5 L10 13.8 L9.5 16.5 L6.5 16.5 L6 13.8 L4.8 16.5 Z" fill="#3b7fe0"/><path d="M14.5 6.5 Q14 1.3 16.8 1.1 Q19.2 1 18.8 4.8 Q18.4 7.8 16.8 10" fill="none" stroke="#3b7fe0" stroke-width="2.3"/><path d="M15.2 6.3 Q14.9 3 16.7 2.8" fill="none" stroke="#2b2d30" stroke-width="0.01"/></svg>
<div class="t" style="left:69px;top:1018px;font-weight:normal">build.gradle.kts<span style="color:#868a91"> (Project: M</span></div>
<svg style="left:51px;top:1043px" width="16" height="14" viewBox="0 0 20 17"><path d="M1.5 16.5 L1.5 11 Q1.5 4 8.5 4 Q12.5 4 14.5 6 L17 9 L16.5 16.5 L13.5 16.5 L12.8 13.5 L10 13.8 L9.5 16.5 L6.5 16.5 L6 13.8 L4.8 16.5 Z" fill="#3b7fe0"/><path d="M14.5 6.5 Q14 1.3 16.8 1.1 Q19.2 1 18.8 4.8 Q18.4 7.8 16.8 10" fill="none" stroke="#3b7fe0" stroke-width="2.3"/><path d="M15.2 6.3 Q14.9 3 16.7 2.8" fill="none" stroke="#2b2d30" stroke-width="0.01"/></svg>
<div class="t" style="left:69px;top:1042px;font-weight:normal">build.gradle.kts<span style="color:#868a91"> (Module :a</span></div>
<svg style="left:51px;top:1067px" width="15" height="15" viewBox="0 0 15 15"><path d="M1.5 4 L3 1 L6 3 H9 L12 1 L13.5 4 Q15 8 13 12 Q11 14.5 7.5 14.5 Q4 14.5 2 12 Q0 8 1.5 4 Z" fill="#e2433b"/><circle cx="5" cy="6.5" r="2" fill="none" stroke="#7a1e1a" stroke-width="1"/><circle cx="10" cy="6.5" r="2" fill="none" stroke="#7a1e1a" stroke-width="1"/></svg>
<div class="t" style="left:69px;top:1066px;font-weight:normal">proguard-rules.pro<span style="color:#868a91"> (ProGu</span></div>
<svg style="left:50px;top:1091px" width="16" height="14" viewBox="0 0 16 14"><path d="M4.5 3 L1 7 L4.5 11 M11.5 3 L15 7 L11.5 11" fill="none" stroke="#3fb6d8" stroke-width="1.4"/><path d="M9.5 1.5 L6.5 12.5" stroke="#cfd1d6" stroke-width="1.3"/></svg>
<div class="t" style="left:69px;top:1090px;font-weight:normal">gradle.properties<span style="color:#868a91"> (Project I</span></div>
<svg style="left:50px;top:1115px" width="16" height="14" viewBox="0 0 16 14"><path d="M4.5 3 L1 7 L4.5 11 M11.5 3 L15 7 L11.5 11" fill="none" stroke="#3fb6d8" stroke-width="1.4"/><path d="M9.5 1.5 L6.5 12.5" stroke="#cfd1d6" stroke-width="1.3"/></svg>
<div class="t" style="left:69px;top:1114px;font-weight:normal">gradle-wrapper.properties</div>
</div>
<div class="a" style="left:276px;top:85px;width:8px;height:1064px;border-radius:4px;background:#4a4b4f"></div>
<div class="a" style="left:41px;top:1211px;width:139px;height:8px;border-radius:4px;background:#4a4b4f"></div>
<div class="a" id="tabs"></div>
<div class="a" style="left:447px;top:41px;width:122px;height:40px;background:#2d2822"></div>
<div class="a" style="left:1219px;top:41px;width:205px;height:40px;background:#2d2822"></div>
<div class="a" style="left:287px;top:78px;width:160px;height:3px;border-radius:0 2px 2px 0;background:#3574f0"></div>
<div class="a" style="left:287px;top:41px;width:1137px;height:40px;overflow:hidden">
<svg style="left:14px;top:13px" width="14" height="14" viewBox="0 0 14 14"><path d="M0 0 H14 L7 7 L14 14 H0 Z" fill="#4d7dd8"/><path d="M0 14 L7 7 L0 0" fill="#3e6cc9"/></svg>
<div class="t" style="left:34px;top:13.0px;color:#dfe1e5">DemoDivider.kt</div>
<svg style="left:172px;top:13px" width="14" height="14" viewBox="0 0 14 14"><path d="M0 0 H14 L7 7 L14 14 H0 Z" fill="#4d7dd8"/><path d="M0 14 L7 7 L0 0" fill="#3e6cc9"/></svg>
<div class="t" style="left:193px;top:13.0px;color:#dfe1e5">Divider.kt</div>
<svg style="left:294px;top:13px" width="14" height="14" viewBox="0 0 14 14"><path d="M0 0 H14 L7 7 L14 14 H0 Z" fill="#4d7dd8"/><path d="M0 14 L7 7 L0 0" fill="#3e6cc9"/></svg>
<div class="t" style="left:314px;top:13.0px;color:#dfe1e5">DemoBadge.kt</div>
<svg style="left:448px;top:13px" width="14" height="14" viewBox="0 0 14 14"><path d="M0 0 H14 L7 7 L14 14 H0 Z" fill="#4d7dd8"/><path d="M0 14 L7 7 L0 0" fill="#3e6cc9"/></svg>
<div class="t" style="left:468px;top:13.0px;color:#dfe1e5">DemoConstraint.kt</div>
<svg style="left:628px;top:13px" width="14" height="14" viewBox="0 0 14 14"><path d="M0 0 H14 L7 7 L14 14 H0 Z" fill="#4d7dd8"/><path d="M0 14 L7 7 L0 0" fill="#3e6cc9"/></svg>
<div class="t" style="left:648px;top:13.0px;color:#dfe1e5">ShapeDemo.kt</div>
<svg style="left:782px;top:13px" width="14" height="14" viewBox="0 0 14 14"><path d="M0 0 H14 L7 7 L14 14 H0 Z" fill="#4d7dd8"/><path d="M0 14 L7 7 L0 0" fill="#3e6cc9"/></svg>
<div class="t" style="left:802px;top:13.0px;color:#dfe1e5">SurfaceDemo.kt</div>
<svg style="left:945px;top:13px" width="14" height="14" viewBox="0 0 14 14"><path d="M0 0 H14 L7 7 L14 14 H0 Z" fill="#4d7dd8"/><path d="M0 14 L7 7 L0 0" fill="#3e6cc9"/></svg>
<div class="t" style="left:965px;top:13.0px;color:#dfe1e5">Surface.kt</div>
<svg style="left:1072px;top:13px" width="14" height="14" viewBox="0 0 14 14"><path d="M0 0 H14 L7 7 L14 14 H0 Z" fill="#4d7dd8"/><path d="M0 14 L7 7 L0 0" fill="#3e6cc9"/></svg>
<div class="t" style="left:1092px;top:13.0px;color:#dfe1e5">RoundedCornerShape.kt</div>
</div>
<div class="a" style="left:1404px;top:41px;width:20px;height:40px;background:linear-gradient(90deg,rgba(45,40,34,0),#2d2822)"></div>
<svg style="left:427px;top:57px" width="8" height="8" viewBox="0 0 8 8"><path d="M0.5 0.5 L7.5 7.5 M7.5 0.5 L0.5 7.5" stroke="#cfd1d6" stroke-width="1.2"/></svg>
<svg style="left:1437px;top:54px" width="14" height="14" viewBox="0 0 14 14"><path d="M1 13 L5.5 8.5 M1 8.5 V13 H5.5 M13 1 L8.5 5.5 M8.5 1 H13 V5.5" fill="none" stroke="#cfd1d6" stroke-width="1.3"/></svg>
<svg style="left:1463px;top:55px" width="15" height="12" viewBox="0 0 15 12"><path d="M5 1.5 L1 6 L5 10.5 M10 1.5 L14 6 L10 10.5" fill="none" stroke="#e55b5b" stroke-width="1.5"/></svg>
<div class="a" style="left:1487px;top:50px;width:24px;height:22px;border-radius:4px;background:#4e5157"></div>
<svg style="left:1491px;top:53px" width="16" height="16" viewBox="0 0 16 16"><rect x="0.5" y="0.5" width="15" height="15" rx="1.5" fill="#f0d44a"/><path d="M0.5 3.5 H15.5" stroke="#3a3520" stroke-width="1"/><path d="M6 6.5 L3.5 9.5 L6 12.5 M10 6.5 L12.5 9.5 L10 12.5" fill="none" stroke="#3a3520" stroke-width="1.3"/></svg>
<svg style="left:1519px;top:54px" width="16" height="13" viewBox="0 0 16 13"><rect x="0.8" y="0.8" width="14.4" height="11.4" rx="1.5" fill="#67b36f"/><rect x="2.5" y="3.5" width="11" height="5.5" fill="#1e1f22"/></svg>
<div class="a" style="left:1544px;top:51px;width:1px;height:20px;background:#43454a"></div>
<div class="a" style="left:1559.5px;top:53.5px;width:3px;height:3px;border-radius:2px;background:#e8d44a"></div>
<div class="a" style="left:1559.5px;top:59.5px;width:3px;height:3px;border-radius:2px;background:#e8d44a"></div>
<div class="a" style="left:1559.5px;top:65.5px;width:3px;height:3px;border-radius:2px;background:#e8d44a"></div>
<div class="a" id="editor"></div>
<div class="a" style="left:287px;top:682px;width:484px;height:22px;background:#26282e"></div>
<div class="a" style="left:356px;top:82px;width:1px;height:1126px;background:#2b2d30"></div>
<div class="a" style="left:389px;top:82px;width:1px;height:28px;background:#313337"></div>
<div class="a" style="left:389px;top:242px;width:1px;height:22px;background:#313337"></div>
<div class="a" style="left:389px;top:286px;width:1px;height:88px;background:#313337"></div>
<div class="a" style="left:389px;top:506px;width:1px;height:88px;background:#313337"></div>
<div class="ln" style="top:90px;color:#4b5059">22</div>
<div class="ln" style="top:112px;color:#4b5059">23</div>
<div class="ln" style="top:134px;color:#4b5059">24</div>
<div class="ln" style="top:156px;color:#4b5059">25</div>
<div class="ln" style="top:178px;color:#4b5059">26</div>
<div class="ln" style="top:200px;color:#4b5059">27</div>
<div class="ln" style="top:222px;color:#4b5059">28</div>
<div class="ln" style="top:244px;color:#4b5059">29</div>
<div class="ln" style="top:266px;color:#4b5059">30</div>
<div class="ln" style="top:288px;color:#4b5059">31</div>
<div class="ln" style="top:310px;color:#4b5059">32</div>
<div class="ln" style="top:332px;color:#4b5059">33</div>
<div class="ln" style="top:354px;color:#4b5059">34</div>
<div class="ln" style="top:376px;color:#4b5059">35</div>
<div class="ln" style="top:398px;color:#4b5059">36</div>
<div class="ln" style="top:420px;color:#4b5059">37</div>
<div class="ln" style="top:442px;color:#4b5059">38</div>
<div class="ln" style="top:464px;color:#4b5059">39</div>
<div class="ln" style="top:486px;color:#4b5059">40</div>
<div class="ln" style="top:508px;color:#4b5059">41</div>
<div class="ln" style="top:530px;color:#4b5059">42</div>
<div class="ln" style="top:552px;color:#4b5059">43</div>
<div class="ln" style="top:574px;color:#4b5059">44</div>
<div class="ln" style="top:596px;color:#4b5059">45</div>
<div class="ln" style="top:618px;color:#4b5059">46</div>
<div class="ln" style="top:640px;color:#4b5059">47</div>
<div class="ln" style="top:662px;color:#4b5059">48</div>
<div class="ln" style="top:684px;color:#a1a3ab">49</div>
<div class="ln" style="top:706px;color:#4b5059">50</div>
<div class="ln" style="top:728px;color:#4b5059">51</div>
<div class="ln" style="top:750px;color:#4b5059">52</div>
<div class="ln" style="top:772px;color:#4b5059">53</div>
<div class="ln" style="top:794px;color:#4b5059">54</div>
<div class="ln" style="top:816px;color:#4b5059">55</div>
<div class="ln" style="top:838px;color:#4b5059">56</div>
<div class="ln" style="top:860px;color:#4b5059">57</div>
<div class="ln" style="top:882px;color:#4b5059">58</div>
<div class="ln" style="top:904px;color:#4b5059">59</div>
<div class="ln" style="top:926px;color:#4b5059">60</div>
<div class="ln" style="top:948px;color:#4b5059">61</div>
<div class="ln" style="top:970px;color:#4b5059">62</div>
<div class="ln" style="top:992px;color:#4b5059">63</div>
<div class="ln" style="top:1014px;color:#4b5059">64</div>
<div class="ln" style="top:1036px;color:#4b5059">65</div>
<div class="ln" style="top:1058px;color:#4b5059">66</div>
<div class="ln" style="top:1080px;color:#4b5059">67</div>
<div class="ln" style="top:1102px;color:#4b5059">68</div>
<div class="ln" style="top:1124px;color:#4b5059">69</div>
<div class="ln" style="top:1146px;color:#4b5059">70</div>
<div class="ln" style="top:1168px;color:#4b5059">71</div>
<div class="ln" style="top:1190px;color:#4b5059">72</div>
<div class="a" style="left:287px;top:82px;width:495px;height:1126px;overflow:hidden">
<div class="cl" style="left:72px;top:-15px">        <span class="cp">Divider</span>()</div>
<div class="cl" style="left:72px;top:7px">        <span class="cp">Text</span>(<span class="na">text =</span> <span class="st">"<span class="sq">Ngoding</span>"</span>)</div>
<div class="cl" style="left:72px;top:29px">    }</div>
<div class="cl" style="left:72px;top:51px">}</div>
<div class="cl" style="left:72px;top:95px"><span class="an">@Composable</span></div>
<div class="cl" style="left:72px;top:117px"><span class="kw">fun </span><span class="gr">DemoHorizontalDivider</span>(modifier: Modifier = Modifier) {</div>
<div class="cl" style="left:72px;top:139px">    <span class="cp">Column</span> (</div>
<div class="cl" style="left:72px;top:161px">        <span class="na">modifier =</span> modifier.<span class="it">fillMaxSize</span>()</div>
<div class="cl" style="left:72px;top:183px">    ){<span class="hint">this: ColumnScope</span></div>
<div class="cl" style="left:72px;top:205px">        <span class="cp">Text</span>(<span class="na">text =</span> <span class="st">"The"</span>)</div>
<div class="cl" style="left:72px;top:227px">        <span class="cm">//Divider 1</span></div>
<div class="cl" style="left:72px;top:249px">        <span class="cp">HorizontalDivider</span>()</div>
<div class="cl" style="left:72px;top:271px">        <span class="cp">Text</span>(<span class="na">text =</span> <span class="st">"<span class="sq">Ngoding</span>"</span>)</div>
<div class="cl" style="left:72px;top:293px">    }</div>
<div class="cl" style="left:72px;top:315px">}</div>
<div class="cl" style="left:72px;top:359px"><span class="an">@Composable</span></div>
<div class="cl" style="left:72px;top:381px"><span class="kw">fun </span><span class="fn">DemoVerticalDivider</span>(<span class="gr">modifier</span>: Modifier = Modifier)</div>
<div class="cl" style="left:72px;top:403px">    <span class="cp">Row</span> {<span class="hint">this: RowScope</span></div>
<div class="cl" style="left:72px;top:425px">        <span class="cp">Text</span>(<span class="na">text =</span> <span class="st">"The "</span>)</div>
<div class="cl" style="left:72px;top:447px">        <span class="cm">//Divider 1</span></div>
<div class="cl" style="left:72px;top:469px">        <span class="cp">VerticalDivider</span>()</div>
<div class="cl" style="left:72px;top:491px">        <span class="cp">Text</span>(<span class="na">text =</span> <span class="st">" <span class="sq">Ngoding</span>"</span>)</div>
<div class="cl" style="left:72px;top:513px">    }</div>
<div class="cl" style="left:72px;top:535px">}</div>
<div class="cl" style="left:72px;top:601px">comp</div>
<div class="cl" style="left:72px;top:667px"><span class="an">@Preview</span>(showSystemUi = <span class="kw">true</span>, showBackground = <span class="kw">true</span>)</div>
<div class="cl" style="left:72px;top:689px"><span class="an">@Composable</span></div>
<div class="cl" style="left:72px;top:711px"><span class="kw">private fun </span><span class="fn">DemoDividerPreview</span>() {</div>
<div class="cl" style="left:72px;top:733px">    <span class="cp">DemoVerticalDivider</span>()</div>
<div class="cl" style="left:72px;top:755px">}</div>
</div>
<div class="a" style="left:389px;top:684px;width:2px;height:18px;background:#ced0d6"></div>
<svg style="left:325px;top:754px" width="12" height="11" viewBox="0 0 12 11"><circle cx="6" cy="5.5" r="3" fill="none" stroke="#cfd1d6" stroke-width="1.3"/><path d="M6 0.5 v2 M6 8.5 v2 M1 5.5 h2 M9 5.5 h2 M2.5 2 l1.4 1.4 M9.5 2 l-1.4 1.4 M2.5 9 l1.4 -1.4 M9.5 9 l-1.4 -1.4" stroke="#cfd1d6" stroke-width="1.2"/></svg>
<svg style="left:326px;top:797px" width="13" height="14" viewBox="0 0 13 14"><path d="M7.5 1 H1 V12 H5" fill="none" stroke="#dfe1e5" stroke-width="1.2"/><path d="M6.5 6 L12 9.5 L6.5 13 Z" fill="none" stroke="#4fae62" stroke-width="1.3"/><path d="M3.5 2.5 h2" stroke="#dfe1e5" stroke-width="1"/></svg>
<svg style="left:680px;top:88px" width="14" height="13" viewBox="0 0 14 13"><path d="M7 0.5 L13.5 12.5 H0.5 Z" fill="#c9a227"/><path d="M7 4.5 V8.5 M7 10 V11" stroke="#2b2200" stroke-width="1.4"/></svg>
<div class="t" style="left:696.5px;top:86px;font-size:12.5px;color:#868a91">4</div>
<svg style="left:711px;top:88px" width="16" height="16" viewBox="0 0 16 16"><path d="M0.5 10 L3.5 1 L6.5 10 M1.7 6.5 H5.3" fill="none" stroke="#3fa0c8" stroke-width="1.2"/><path d="M5.5 10 L8 13 L13 6" fill="none" stroke="#3f90d8" stroke-width="1.3"/></svg>
<div class="t" style="left:728.5px;top:86px;font-size:12.5px;color:#868a91">3</div>
<svg style="left:743px;top:89px" width="11" height="12" viewBox="0 0 11 12"><path d="M5.5 11.5 V1 M1 5.5 L5.5 1 L10 5.5" fill="none" stroke="#8fd3d8" stroke-width="1.4"/></svg>
<svg style="left:764px;top:89px" width="11" height="12" viewBox="0 0 11 12"><path d="M5.5 0.5 V11 M1 6.5 L5.5 11 L10 6.5" fill="none" stroke="#8fd3d8" stroke-width="1.4"/></svg>
<div class="a" style="left:771px;top:300px;width:8px;height:822px;border-radius:4px;background:#4a4b4f"></div>
<div class="a" style="left:768px;top:285px;width:14px;height:2px;background:#c98a2e"></div>
<div class="a" style="left:768px;top:577px;width:14px;height:2px;background:#c98a2e"></div>
<div class="a" style="left:359px;top:1208px;width:423px;height:14px;background:#26272b"></div>
<div class="cl" style="left:772.5px;top:463px;letter-spacing:0">)</div>
<div class="a" style="left:362px;top:1211px;width:371px;height:8px;border-radius:4px;background:#4a4b4f"></div>
<div class="a" id="preview"></div>
<div class="a" id="ptool"></div>
<svg style="left:797px;top:93px" width="12" height="11" viewBox="0 0 12 11"><rect x="0" y="0" width="3" height="11" fill="#6f737a"/><rect x="4" y="0" width="8" height="4" fill="#6f737a"/><rect x="4" y="5" width="3.5" height="6" fill="#6f737a"/><rect x="8.5" y="5" width="3.5" height="6" fill="#6f737a"/></svg>
<svg style="left:1489px;top:92px" width="14" height="14" viewBox="0 0 14 14"><line x1="10.00" y1="7.00" x2="13.00" y2="7.00" stroke="#cfd1d6" stroke-opacity="0.35" stroke-width="1.4"/><line x1="9.12" y1="9.12" x2="11.24" y2="11.24" stroke="#cfd1d6" stroke-opacity="0.44" stroke-width="1.4"/><line x1="7.00" y1="10.00" x2="7.00" y2="13.00" stroke="#cfd1d6" stroke-opacity="0.54" stroke-width="1.4"/><line x1="4.88" y1="9.12" x2="2.76" y2="11.24" stroke="#cfd1d6" stroke-opacity="0.63" stroke-width="1.4"/><line x1="4.00" y1="7.00" x2="1.00" y2="7.00" stroke="#cfd1d6" stroke-opacity="0.72" stroke-width="1.4"/><line x1="4.88" y1="4.88" x2="2.76" y2="2.76" stroke="#cfd1d6" stroke-opacity="0.81" stroke-width="1.4"/><line x1="7.00" y1="4.00" x2="7.00" y2="1.00" stroke="#cfd1d6" stroke-opacity="0.91" stroke-width="1.4"/><line x1="9.12" y1="4.88" x2="11.24" y2="2.76" stroke="#cfd1d6" stroke-opacity="1.00" stroke-width="1.4"/></svg>
<div class="t" style="left:1506.5px;top:91px;color:#dfe1e5">Loading...</div>
<div class="t" style="left:965px;top:191px;font-size:11.7px;color:#c4c6cc">DemoDividerPreview</div>
<div class="a" style="left:964px;top:212px;width:434px;height:938px;background:#fafafa;border:1px solid #000"></div>
<div class="a" style="left:965px;top:213px;width:432px;height:27px;background:#777777"></div>
<div class="t" style="left:970.5px;top:220px;font-size:18px;line-height:20px;height:20px;color:#fff;-webkit-text-stroke:0.35px #fff">14:00</div>
<svg style="left:1349px;top:218px" width="22" height="17" viewBox="0 0 22 17"><path d="M11 16 L0.5 4 Q11 -4 21.5 4 Z" fill="#fff"/></svg>
<svg style="left:1376px;top:217px" width="13" height="19" viewBox="0 0 13 19"><rect x="3.5" y="0" width="6" height="2" fill="#fff"/><rect x="0.5" y="2" width="12" height="16.5" rx="0.5" fill="#fff"/></svg>
<div class="t" style="left:965px;top:241px;font-size:15px;line-height:18px;height:18px;color:#1c1b1f">The</div>
<div class="t" style="left:999px;top:241px;font-size:15px;line-height:18px;height:18px;color:#1c1b1f">Ngoding</div>
<div class="a" style="left:994px;top:240px;width:1px;height:856px;background:#cac4d0"></div>
<svg style="left:1021px;top:1112px" width="20" height="21" viewBox="0 0 20 21"><path d="M18 1.5 L2 10.5 L18 19.5 Z" fill="none" stroke="#eeeeee" stroke-width="2.2" stroke-linejoin="round"/></svg>
<svg style="left:1170px;top:1112px" width="21" height="21" viewBox="0 0 21 21"><circle cx="10.5" cy="10.5" r="8.5" fill="none" stroke="#eeeeee" stroke-width="2.2"/></svg>
<svg style="left:1322px;top:1113px" width="19" height="19" viewBox="0 0 19 19"><rect x="1.5" y="1.5" width="16" height="16" fill="none" stroke="#eeeeee" stroke-width="2.2"/></svg>
<div class="a" id="rstrip"></div>
<div class="a" style="left:1617px;top:0;width:2px;height:1252px;background:#101114"></div>
<svg style="left:1593px;top:52px" width="17" height="19" viewBox="0 0 17 19"><path d="M8 1.5 Q13 1.5 13.5 8 L14 13 L16 15.5 H0.5 L2.5 13 L3 8 Q3.5 1.5 8 1.5 Z" fill="#dfe1e5"/><rect x="6.3" y="16" width="3.6" height="2" rx="1" fill="#dfe1e5"/></svg>
<div class="a" style="left:1604.5px;top:50.5px;width:7px;height:7px;border-radius:4px;background:#3b7ff0;border:1px solid #2b2d30"></div>
<svg style="left:1591px;top:93px" width="19" height="17" viewBox="0 0 20 17"><path d="M1.5 16.5 L1.5 11 Q1.5 4 8.5 4 Q12.5 4 14.5 6 L17 9 L16.5 16.5 L13.5 16.5 L12.8 13.5 L10 13.8 L9.5 16.5 L6.5 16.5 L6 13.8 L4.8 16.5 Z" fill="#2ea8c8"/><path d="M14.5 6.5 Q14 1.3 16.8 1.1 Q19.2 1 18.8 4.8 Q18.4 7.8 16.8 10" fill="none" stroke="#2ea8c8" stroke-width="2.3"/><path d="M15.2 6.3 Q14.9 3 16.7 2.8" fill="none" stroke="#2b2d30" stroke-width="0.01"/></svg>
<svg style="left:1592px;top:133px" width="19" height="17" viewBox="0 0 19 17"><path d="M8 1 H1.5 V16 H4" fill="none" stroke="#cfd1d6" stroke-width="1.3"/><path d="M8 1 V8" stroke="#cfd1d6" stroke-width="1.3"/><path d="M4 3.5 h2" stroke="#cfd1d6" stroke-width="1"/><path d="M6.5 16 Q6.5 10 12 10 Q17.5 10 17.5 16 Z" fill="none" stroke="#cfd1d6" stroke-width="1.3"/><path d="M8 9 L7 7.5 M16 9 L17 7.5" stroke="#cfd1d6" stroke-width="1.2"/></svg>
<svg style="left:1591px;top:172px" width="20" height="19" viewBox="0 0 20 19"><circle cx="6" cy="5" r="3.8" fill="none" stroke="#cfd1d6" stroke-width="1.3"/><circle cx="13.5" cy="5" r="3.8" fill="none" stroke="#cfd1d6" stroke-width="1.3"/><path d="M1 15 Q1 9.5 6 9.5 H9" fill="none" stroke="#cfd1d6" stroke-width="1.3"/><rect x="9" y="9" width="10" height="7" rx="1.5" fill="#cfd1d6"/><path d="M14 16 L15 18.5 L17 16" fill="#cfd1d6"/></svg>
<svg style="left:1593px;top:211px" width="16" height="21" viewBox="0 0 16 21"><path d="M9 0.5 H15 L3.5 12 L0.5 9 Z" fill="#4fc3f7"/><path d="M9 9.5 H15 L9.5 15 L6.5 12 Z" fill="#4fc3f7"/><path d="M6.5 12 L9.5 15 L15 20.5 H9 L3.5 15 Z" fill="#1e63b3"/></svg>
<svg style="left:1592px;top:252px" width="19" height="18" viewBox="0 0 19 18"><path d="M9 1 H1.5 V15 H4" fill="none" stroke="#cfd1d6" stroke-width="1.3"/><path d="M4 3.5 h2" stroke="#cfd1d6" stroke-width="1"/><rect x="6" y="8.5" width="11" height="6" rx="0.5" fill="none" stroke="#cfd1d6" stroke-width="1.3"/><path d="M5 17 H18" stroke="#cfd1d6" stroke-width="1.3"/></svg>
<div class="a" id="status"></div>
<div class="a" style="left:12.5px;top:1236px;width:3px;height:3px;background:#8ad8e0"></div>
<div class="t" style="left:22.5px;top:1229.0px;font-size:14px;color:#b4b7bc;font-weight:normal;">MyApplication</div>
<svg style="left:119.5px;top:1232px" width="6" height="10" viewBox="0 0 6 10"><path d="M0.8 0.8 L5 5 L0.8 9.2" fill="none" stroke="#3fa6d6" stroke-width="1.4"/></svg>
<div class="a" style="left:136px;top:1236px;width:3px;height:3px;background:#8ad8e0"></div>
<div class="t" style="left:146px;top:1229.0px;font-size:14px;color:#b4b7bc;font-weight:normal;">app</div>
<svg style="left:178px;top:1232px" width="6" height="10" viewBox="0 0 6 10"><path d="M0.8 0.8 L5 5 L0.8 9.2" fill="none" stroke="#3fa6d6" stroke-width="1.4"/></svg>
<div class="t" style="left:193px;top:1229.0px;font-size:14px;color:#b4b7bc;font-weight:normal;">src</div>
<svg style="left:221px;top:1232px" width="6" height="10" viewBox="0 0 6 10"><path d="M0.8 0.8 L5 5 L0.8 9.2" fill="none" stroke="#3fa6d6" stroke-width="1.4"/></svg>
<div class="a" style="left:238.5px;top:1236px;width:3px;height:3px;background:#8ad8e0"></div>
<div class="t" style="left:248px;top:1229.0px;font-size:14px;color:#b4b7bc;font-weight:normal;">main</div>
<svg style="left:286px;top:1232px" width="6" height="10" viewBox="0 0 6 10"><path d="M0.8 0.8 L5 5 L0.8 9.2" fill="none" stroke="#3fa6d6" stroke-width="1.4"/></svg>
<div class="t" style="left:300.5px;top:1229.0px;font-size:14px;color:#b4b7bc;font-weight:normal;">java</div>
<svg style="left:334.5px;top:1232px" width="6" height="10" viewBox="0 0 6 10"><path d="M0.8 0.8 L5 5 L0.8 9.2" fill="none" stroke="#3fa6d6" stroke-width="1.4"/></svg>
<div class="t" style="left:349px;top:1229.0px;font-size:14px;color:#b4b7bc;font-weight:normal;">com</div>
<svg style="left:384px;top:1232px" width="6" height="10" viewBox="0 0 6 10"><path d="M0.8 0.8 L5 5 L0.8 9.2" fill="none" stroke="#3fa6d6" stroke-width="1.4"/></svg>
<div class="t" style="left:399px;top:1229.0px;font-size:14px;color:#b4b7bc;font-weight:normal;letter-spacing:0.25px">thengoding</div>
<svg style="left:481px;top:1232px" width="6" height="10" viewBox="0 0 6 10"><path d="M0.8 0.8 L5 5 L0.8 9.2" fill="none" stroke="#3fa6d6" stroke-width="1.4"/></svg>
<div class="t" style="left:495px;top:1229.0px;font-size:14px;color:#b4b7bc;font-weight:normal;">myapplication</div>
<svg style="left:590px;top:1232px" width="6" height="10" viewBox="0 0 6 10"><path d="M0.8 0.8 L5 5 L0.8 9.2" fill="none" stroke="#3fa6d6" stroke-width="1.4"/></svg>
<svg style="left:605px;top:1229.5px" width="14" height="14" viewBox="0 0 14 14"><path d="M0 0 H14 L7 7 L14 14 H0 Z" fill="#4d7dd8"/><path d="M0 14 L7 7 L0 0" fill="#3e6cc9"/></svg>
<div class="t" style="left:624px;top:1229.0px;font-size:14px;color:#b4b7bc;font-weight:normal;">DemoDivider.kt</div>
<div class="t" style="left:974px;top:1229.0px;font-size:14px;color:#b4b7bc;font-weight:normal;letter-spacing:-0.19px">Rendering preview 1 of 1...</div>
<div class="a" style="left:1143px;top:1235px;width:146px;height:4px;border-radius:2px;background:linear-gradient(90deg,#2f63d8,#4d8af5)"></div>
<div class="a" style="left:1297.5px;top:1233px;width:7px;height:7px;background:#cfd1d6"></div>
<div class="t" style="left:1320.5px;top:1229.0px;font-size:14px;color:#b4b7bc;font-weight:normal;">49:5</div>
<div class="t" style="left:1364px;top:1229.0px;font-size:14px;color:#b4b7bc;font-weight:normal;">LF</div>
<div class="t" style="left:1395px;top:1229.0px;font-size:14px;color:#b4b7bc;font-weight:normal;">UTF-8</div>
<svg style="left:1451px;top:1229px" width="16" height="15" viewBox="0 0 16 15"><path d="M1 1 H15 V11 H9 L5 14 V11 H1 Z" fill="none" stroke="#cfd1d6" stroke-width="1.3"/><path d="M8 3.5 V7 M8 8.5 V9.5" stroke="#cfd1d6" stroke-width="1.3"/></svg>
<svg style="left:1483px;top:1229px" width="16" height="15" viewBox="0 0 16 15"><path d="M2 6 Q1 1 5 1 Q7.5 1 8 3 Q8.5 1 11 1 Q15 1 14 6 Q15.5 7 15.5 9 Q15.5 14 8 14 Q0.5 14 0.5 9 Q0.5 7 2 6 Z" fill="none" stroke="#cfd1d6" stroke-width="1.3"/><circle cx="5.5" cy="9" r="1" fill="#cfd1d6"/><circle cx="10.5" cy="9" r="1" fill="#cfd1d6"/></svg>
<div class="t" style="left:1515px;top:1229.0px;font-size:14px;color:#b4b7bc;font-weight:normal;">4 spaces</div>
<svg style="left:1587px;top:1230px" width="14" height="14" viewBox="0 0 14 14"><path d="M1.5 6 V4 Q1.5 1.2 4 1.2 Q6.5 1.2 6.5 4 V6.5" fill="none" stroke="#cfd1d6" stroke-width="1.3"/><rect x="4" y="6" width="8" height="6.5" fill="#cfd1d6"/></svg>
<div class="a" style="left:4px;top:1251px;width:1611px;height:1px;background:#6e7177"></div>
<div class="a" style="left:5px;top:0px;width:1609px;height:1px;background:linear-gradient(90deg,#737a8c,#5c5f66 40%,#55585e)"></div>
<div class="a" style="left:326px;top:703px;width:552px;height:57px;border-radius:7px;background:#36383c;border:1px solid #131416;box-shadow:0 2px 6px rgba(0,0,0,.5)"></div>
<div class="a" style="left:331px;top:708px;width:543px;height:24px;border-radius:4px;background:#404246"></div>
<svg style="left:341px;top:713px" width="12" height="13" viewBox="0 0 12 13"><circle cx="6" cy="2.5" r="2" fill="#c9a9f0"/><rect x="5" y="4" width="2" height="4" fill="#c9a9f0"/><rect x="1" y="7.5" width="10" height="3" rx="1" fill="#c9a9f0"/><rect x="0.5" y="11" width="11" height="1.5" fill="#a98ae0"/></svg>
<div class="cl" style="left:359.5px;top:710px;color:#548af7">comp</div>
<div class="cl" style="left:645px;top:710px;color:#6f737a;font-size:13.3px;letter-spacing:0.03px">Create @Composable function</div>
<div class="t" style="left:339.5px;top:737.5px;font-size:12.5px;color:#7a7e85">Press ^. to choose the selected (or first) suggestion and insert a dot afterwards</div>
<div class="t" style="left:783.5px;top:737.5px;font-size:12.5px;color:#548af7">Next Tip</div>
<svg style="left:832px;top:738px" width="16" height="16" viewBox="0 0 16 16"><path d="M8 3.5 Q12 3.5 12 7.5 Q12 9.5 10 11 V12.5 H6 V11 Q4 9.5 4 7.5 Q4 3.5 8 3.5 Z" fill="#f2c94c"/><rect x="6.3" y="13" width="3.4" height="2" fill="#f2c94c"/><path d="M8 0.5 v1.5 M2.5 2.5 l1 1 M13.5 2.5 l-1 1 M0.5 7.5 h1.5 M14 7.5 h1.5" stroke="#f2c94c" stroke-width="1"/></svg>
<div class="a" style="left:858.5px;top:739.5px;width:3px;height:3px;border-radius:2px;background:#e8d44a"></div>
<div class="a" style="left:858.5px;top:744.5px;width:3px;height:3px;border-radius:2px;background:#e8d44a"></div>
<div class="a" style="left:858.5px;top:749.5px;width:3px;height:3px;border-radius:2px;background:#e8d44a"></div>
</div></body></html>
